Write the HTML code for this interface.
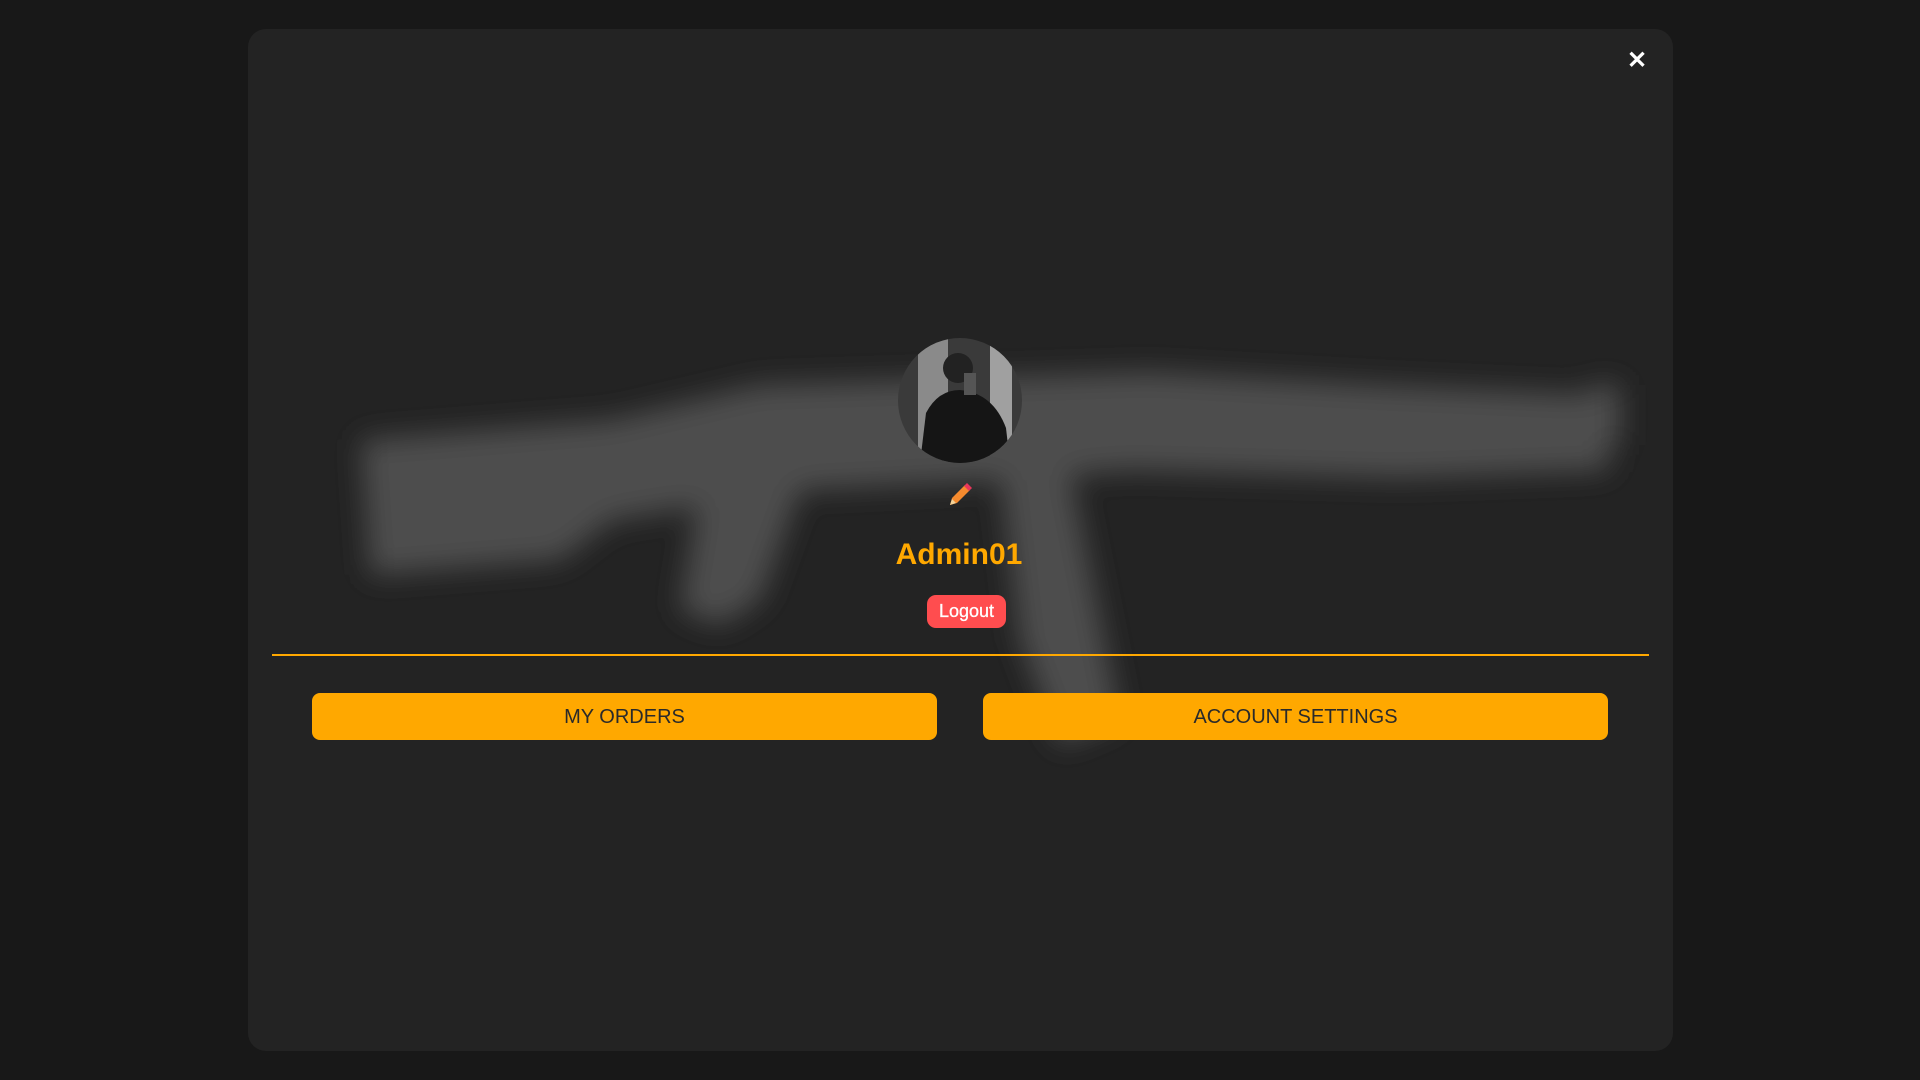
<!DOCTYPE html>
<html><head><meta charset="utf-8"><style>
html,body{margin:0;padding:0;width:1920px;height:1080px;background:#181818;overflow:hidden;font-family:"Liberation Sans",Arial,sans-serif}
.modal{position:absolute;left:248px;top:29px;width:1425px;height:1022px;background:#232323;border-radius:18px;overflow:hidden}
.gun{position:absolute;left:0;top:0}
.close{position:absolute;left:1379px;top:17px;color:#fff;font-size:24px;font-weight:bold}
.avatar{position:absolute;left:650px;top:309px;width:124px;height:125px;border-radius:50%;overflow:hidden}
.name{position:absolute;left:0;width:1422px;top:509px;text-align:center;color:#ffa800;font-size:30px;font-weight:bold}
.logout{position:absolute;left:679px;top:566px;width:79px;height:33px;background:#ff4d4f;border-radius:9px;color:#fff;font-size:18px;line-height:33px;text-align:center;-webkit-text-stroke:0.3px #fff}
.line{position:absolute;left:24px;top:625px;width:1377px;height:2px;background:#ffa800}
.btn{position:absolute;top:664px;width:625px;height:47px;background:#ffa800;border-radius:8px;color:#2a2a2a;font-size:20px;line-height:49px;text-align:center}
</style></head><body>
<div class="modal">
<svg class="gun" width="1425" height="1022"><defs><filter id="b"><feGaussianBlur stdDeviation="14"/></filter></defs>
<g fill="#4d4d4d" filter="url(#b)" transform="translate(-248,-29)">
<polygon points="361,440 612,420 760,385 1150,372 1380,385 1600,395 1610,470 1400,478 1130,470 1000,480 800,490 612,520 560,560 370,575"/>
<polygon points="700,490 800,490 760,600 720,625 680,610"/>
<polygon points="1000,470 1070,470 1120,720 1060,745 1020,640"/>
<rect x="1590" y="385" width="30" height="60"/>
</g></svg>
<div class="close">✕</div>
<div class="avatar">
<svg width="124" height="125"><rect x="0" y="0" width="124" height="125" fill="#3a3a3a"/><rect x="20" y="0" width="30" height="125" fill="#8a8a8a"/><rect x="92" y="0" width="22" height="125" fill="#a0a0a0"/><circle cx="60" cy="30" r="15" fill="#222"/><path d="M22 125 L28 75 Q40 52 62 52 Q95 55 108 90 L112 125Z" fill="#151515"/><rect x="66" y="35" width="12" height="22" fill="#555"/></svg>
</div>
<svg style="position:absolute;left:699px;top:453px" width="26" height="26"><path d="M3 23 L5 16 L18 3 L23 8 L10 21Z" fill="#f58a2e"/><path d="M17 4 L20 1 L25 6 L22 9Z" fill="#e8365a"/><path d="M3 23 L5 17 L9 21Z" fill="#f3d39a"/></svg>
<div class="name">Admin01</div>
<div class="logout">Logout</div>
<div class="line"></div>
<div class="btn" style="left:64px">MY ORDERS</div>
<div class="btn" style="left:735px">ACCOUNT SETTINGS</div>
</div>
</body></html>
